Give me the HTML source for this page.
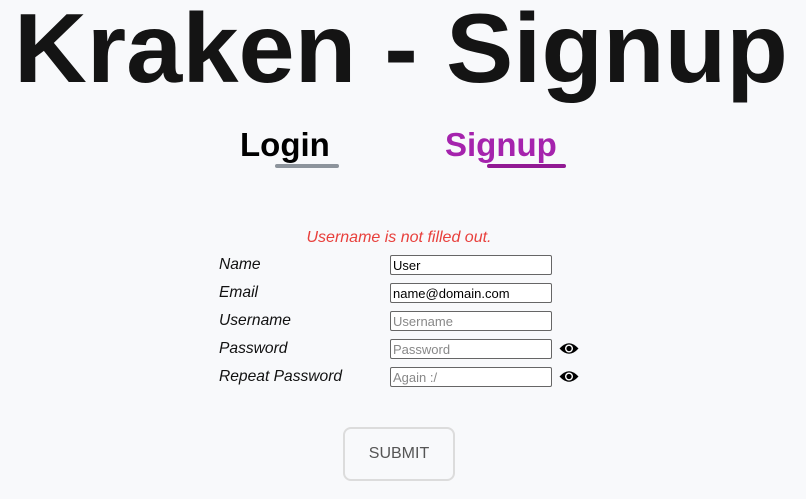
<!DOCTYPE html>
<html><head><style>
body{margin:0;width:806px;height:499px;background:#f8f9fb;position:relative;overflow:hidden;font-family:"Liberation Sans",sans-serif}
.a{position:absolute}
h1{position:absolute;margin:0;left:14px;top:-8px;font-size:98px;font-weight:bold;color:#141414;white-space:nowrap;transform-origin:0 0;transform:scaleX(1.03)}
.tab{font-size:33px;font-weight:bold;white-space:nowrap}
.lbl{font-style:italic;font-size:15.6px;color:#111;left:219px}
input{position:absolute;left:390px;width:162px;height:20px;box-sizing:border-box;border:1px solid #666;border-radius:2px;background:#fff;font-family:"Liberation Sans",sans-serif;font-size:13px;padding:0 2px;color:#000}
input::placeholder{color:#888}
</style></head><body>
<h1>Kraken - Signup</h1>
<div class="a tab" style="left:240px;top:126px;color:#000">Login</div>
<div class="a" style="left:275px;top:164px;width:64px;height:4px;border-radius:2px;background:#8d949c"></div>
<div class="a tab" style="left:445px;top:126px;color:#a523ad">Signup</div>
<div class="a" style="left:487px;top:164px;width:79px;height:4px;border-radius:2px;background:#921a94"></div>
<div class="a" style="left:0;width:798px;text-align:center;top:229px;font-style:italic;font-size:16px;color:#e8403c">Username is not filled out.</div>
<div class="a lbl" style="top:256px">Name</div>
<div class="a lbl" style="top:284px">Email</div>
<div class="a lbl" style="top:312px">Username</div>
<div class="a lbl" style="top:340px">Password</div>
<div class="a lbl" style="top:368px">Repeat Password</div>
<input style="top:255px" value="User">
<input style="top:283px" value="name@domain.com">
<input style="top:311px" placeholder="Username">
<input style="top:339px" placeholder="Password">
<input style="top:367px" placeholder="Again :/">
<svg class="a" style="left:559px;top:341px" width="20" height="15" viewBox="0 0 20 15"><path d="M0.5 7.5Q10-3 19.5 7.5Q10 18 0.5 7.5Z" fill="#000"/><circle cx="10" cy="7.5" r="4" fill="#fff"/><circle cx="10" cy="7.5" r="2.6" fill="#000"/></svg>
<svg class="a" style="left:559px;top:369px" width="20" height="15" viewBox="0 0 20 15"><path d="M0.5 7.5Q10-3 19.5 7.5Q10 18 0.5 7.5Z" fill="#000"/><circle cx="10" cy="7.5" r="4" fill="#fff"/><circle cx="10" cy="7.5" r="2.6" fill="#000"/></svg>
<div class="a" style="left:343px;top:427px;width:112px;height:54px;box-sizing:border-box;border:2px solid #dcdcdc;border-radius:8px;text-align:center;line-height:50px;font-size:16px;color:#555">SUBMIT</div>
</body></html>
